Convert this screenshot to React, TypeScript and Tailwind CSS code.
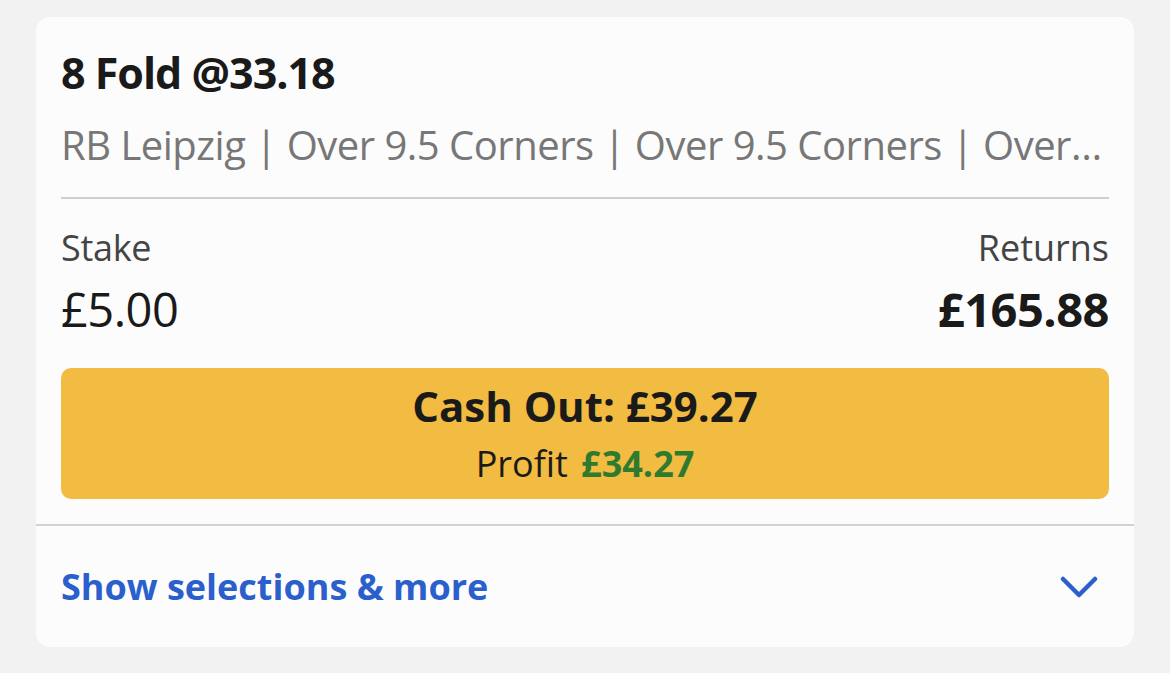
import React from "react";

export default function App() {
  return (
    <div
      className="w-[1170px] h-[673px] bg-[#f2f2f2] pt-[17px] px-[36px]"
      style={{ fontFamily: '"Open Sans", "Noto Sans", sans-serif' }}
    >
      <div className="w-[1098px] h-[630px] bg-[#fcfcfc] rounded-[14px] flex flex-col">
        <div className="px-[25px] pt-[34px] pb-[25px]">
          <div className="text-[43px] leading-[44px] font-bold text-[#1a1a1a] tracking-[-1px]">
            8 Fold @33.18
          </div>
          <div className="mt-[24px] text-[40px] leading-[52px] text-[#777777] tracking-[-0.5px] whitespace-nowrap overflow-hidden text-ellipsis">
            RB Leipzig | Over 9.5 Corners | Over 9.5 Corners | Over 9.5 Corners | Over 9.5 Corners
          </div>
          <div className="mt-[26px] h-[2px] bg-[#cfcfcf]" />
          <div className="mt-[30px] flex justify-between">
            <div className="flex flex-col">
              <div className="text-[36px] leading-[38px] text-[#444444] tracking-[-0.3px]">Stake</div>
              <div className="mt-[18px] text-[47px] leading-[48px] text-[#1a1a1a] tracking-[-0.5px]">£5.00</div>
            </div>
            <div className="flex flex-col items-end">
              <div className="text-[36px] leading-[38px] text-[#444444]">Returns</div>
              <div className="mt-[18px] text-[47px] leading-[48px] font-bold text-[#1a1a1a] tracking-[-0.5px]">£165.88</div>
            </div>
          </div>
          <div className="mt-[35px] h-[131px] rounded-[10px] bg-[#f2bb42] flex flex-col items-center justify-center">
            <div className="text-[42px] leading-[42px] font-bold text-[#1a1a1a]">Cash Out: £39.27</div>
            <div className="mt-[19px] text-[36px] leading-[36px] text-[#1a1a1a]">
              Profit <span className="ml-[4px] font-bold text-[#2e7a2e]">£34.27</span>
            </div>
          </div>
        </div>
        <div className="h-[2px] bg-[#d2d2d2]" />
        <div className="flex-1 flex items-center justify-between pl-[25px] pr-[36px]">
          <div className="text-[36px] leading-[38px] font-bold text-[#2b5fcc]">Show selections &amp; more</div>
          <svg width="38" height="24" viewBox="0 0 38 24" fill="none">
            <path d="M3 4 L19 20 L35 4" stroke="#2b5fcc" strokeWidth="4.5" strokeLinecap="round" strokeLinejoin="round" />
          </svg>
        </div>
      </div>
    </div>
  );
}
